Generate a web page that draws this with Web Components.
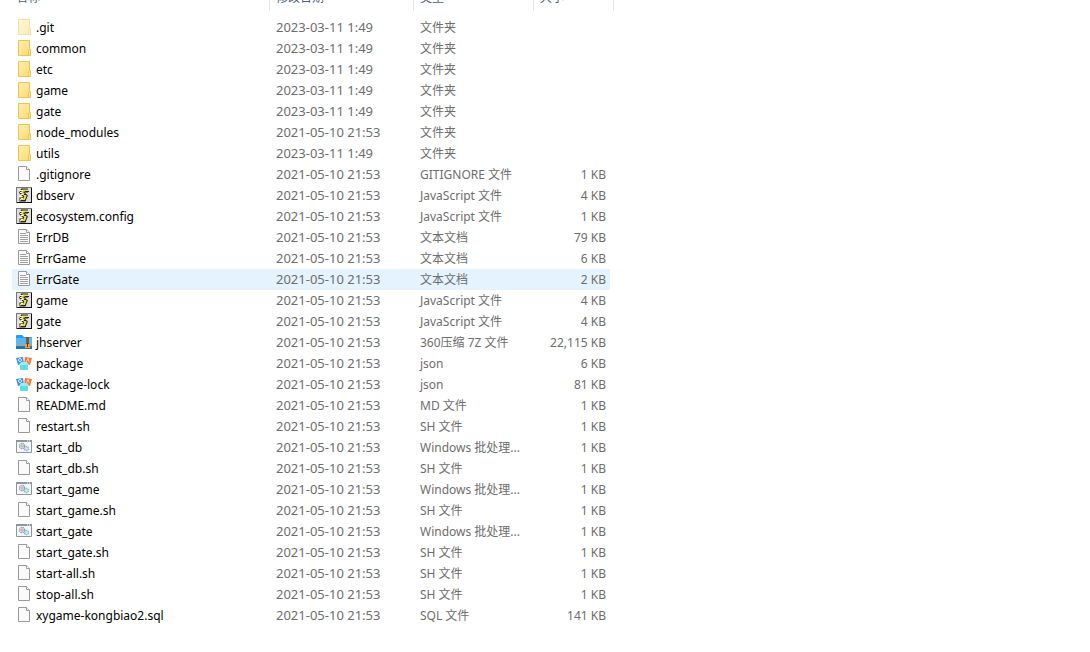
<!DOCTYPE html>
<html lang="zh-CN">
<head>
<meta charset="utf-8">
<title>jhserver</title>
<style>
  body { margin: 0; background: #fff; font: 12px/21px "Noto Sans", "Noto Sans CJK SC", sans-serif; }
</style>
</head>
<body>
<file-list></file-list>
<script>
const NOTE = `<path d="M2.500 .5h8l3 3v11h-11z" fill="#fafafa" stroke="#999"/><path d="M10.500 .500v3h3" fill="#fff" stroke="#999"/>`;
const ICONS = {
  folder: `<defs><linearGradient id="g" x2="1" y2="1"><stop stop-color="#ffefb3"/><stop offset="1" stop-color="#ffda70"/></linearGradient></defs>
    <path d="M2.500 .5h11v15h-11z" fill="url(#g)" stroke="#e9c752"/><path d="M12.500 15.500v-5l1-1h1v6z" fill="#ffe48c" stroke="#e9c752"/>`,
  file: NOTE,
  text: NOTE + `<path d="M4 4.500h6M4 6.500h8M4 8.500h8M4 10.500h8M4 12.500h8" stroke="#a0a0a0"/>`,
  script: `<path d="M0 0h16v16H0z" fill="#777"/><path d="M1 1h15v15H1z" fill="#111"/><path d="M1 1h14v14H1z" fill="#dedede"/>
    <path d="M12 3.500H6.500l-1 2 4 3.500-1.500 3.500H3.500" fill="none" stroke="#222" stroke-width="4"/>
    <path d="M12 3.500H7L6 5.500 9.500 9 8 12.500H4" fill="none" stroke="#efe03a" stroke-width="2"/>
    <path d="M4 3.500h3M4 5.500h2M5 7.500h2M3 9.500h3M5 11.500h2" stroke="#fff"/><path d="M9 4.500h4M8 7.500h2M5 13.500h5" stroke="#222"/>`,
  archive: `<path d="M0 2q0-1 1-1h5l2 2h7q1 0 1 1v10H0z" fill="#2a9be8"/><path d="M0 4h16v9H0z" fill="#55b9f8"/><path d="M0 11h16v4H0z" fill="#1778cb"/>
    <path d="M10 3h3v12h-3z" fill="#8d5524"/><path d="M0 11h16v1H0z" fill="#e89b32"/><path d="M9 10h5v4H9z" fill="#e9a13b"/><path d="M11 9h1v4h-1z" fill="#5c2c13"/>`,
  json: `<path d="M0 3l7-1 1 7-6 1z" fill="#3f93ee"/><path d="M9 2l7 1-2 7-6-1z" fill="#f4793b"/>
    <circle cx="4" cy="5" r="1.500" fill="none" stroke="#d8eeff"/><path d="M10.500 6.500l1.500-3 1 3" fill="none" stroke="#ffe0cd"/>
    <path d="M4 9h8v5q0 1-1 1H5q-1 0-1-1z" fill="#62dce4"/><path d="M5 7h6l2 3H3z" fill="#93f0f0"/>`,
  batch: `<path d="M.5 1.500h15v12H.5z" fill="#f6f6f6" stroke="#8c969e"/><path d="M0 1h16v2H0z" fill="#8c969e"/><path d="M11 2h1M13 2h1" stroke="#fff"/>
    <circle cx="6" cy="7" r="2.500" fill="none" stroke="#9a9a9a" stroke-width="1.500" stroke-dasharray="1.300 .7"/><circle cx="6" cy="7" r="1" fill="none" stroke="#aaa"/>
    <circle cx="10.500" cy="9.500" r="2" fill="#d9effb" stroke="#7db9dc" stroke-width="1.500" stroke-dasharray="1.300 .6"/>`
};

class FileIcon extends HTMLElement {
  connectedCallback() {
    this.attachShadow({ mode: "open" }).innerHTML = `
      <style>
        :host { display: block; flex: none; width: 16px; height: 16px; }
        :host([faded]) { opacity: .5; }
        svg { display: block; }
      </style>
      <svg width="16" height="16" viewBox="0 0 16 16" aria-hidden="true">${ICONS[this.getAttribute("kind")]}</svg>`;
  }
}
customElements.define("file-icon", FileIcon);

const OLD = "2021-05-10 21:53", NEW = "2023-03-11 1:49";
const FILES = [
  ["folder", ".git", NEW, "文件夹", ""],
  ["folder", "common", NEW, "文件夹", ""],
  ["folder", "etc", NEW, "文件夹", ""],
  ["folder", "game", NEW, "文件夹", ""],
  ["folder", "gate", NEW, "文件夹", ""],
  ["folder", "node_modules", OLD, "文件夹", ""],
  ["folder", "utils", NEW, "文件夹", ""],
  ["file", ".gitignore", OLD, "GITIGNORE 文件", "1 KB"],
  ["script", "dbserv", OLD, "JavaScript 文件", "4 KB"],
  ["script", "ecosystem.config", OLD, "JavaScript 文件", "1 KB"],
  ["text", "ErrDB", OLD, "文本文档", "79 KB"],
  ["text", "ErrGame", OLD, "文本文档", "6 KB"],
  ["text", "ErrGate", OLD, "文本文档", "2 KB"],
  ["script", "game", OLD, "JavaScript 文件", "4 KB"],
  ["script", "gate", OLD, "JavaScript 文件", "4 KB"],
  ["archive", "jhserver", OLD, "360压缩 7Z 文件", "22,115 KB"],
  ["json", "package", OLD, "json", "6 KB"],
  ["json", "package-lock", OLD, "json", "81 KB"],
  ["file", "README.md", OLD, "MD 文件", "1 KB"],
  ["file", "restart.sh", OLD, "SH 文件", "1 KB"],
  ["batch", "start_db", OLD, "Windows 批处理...", "1 KB"],
  ["file", "start_db.sh", OLD, "SH 文件", "1 KB"],
  ["batch", "start_game", OLD, "Windows 批处理...", "1 KB"],
  ["file", "start_game.sh", OLD, "SH 文件", "1 KB"],
  ["batch", "start_gate", OLD, "Windows 批处理...", "1 KB"],
  ["file", "start_gate.sh", OLD, "SH 文件", "1 KB"],
  ["file", "start-all.sh", OLD, "SH 文件", "1 KB"],
  ["file", "stop-all.sh", OLD, "SH 文件", "1 KB"],
  ["file", "xygame-kongbiao2.sql", OLD, "SQL 文件", "141 KB"]
];

class FileList extends HTMLElement {
  connectedCallback() {
    const rows = FILES.map(([kind, name, date, type, size]) => `
      <tr${name === "ErrGate" ? ' class="active"' : ""}>
        <td><div class="name"><file-icon kind="${kind}"${name === ".git" ? " faded" : ""}></file-icon><span>${name}</span></div></td>
        <td class="date">${date}</td><td>${type}</td><td class="size">${size}</td>
      </tr>`).join("");
    this.attachShadow({ mode: "open" }).innerHTML = `
      <style>
        :host { display: block; overflow: hidden; padding: 0 12px 24px; }
        table { table-layout: fixed; width: 602px; margin-top: -13px; border-collapse: separate; border-spacing: 0; color: #6d6d6d; }
        .c-name { width: 258px; } .c-date { width: 144px; } .c-type { width: 120px; } .c-size { width: 76px; } .c-end { width: 4px; }
        th { height: 24px; padding: 0 0 2px 6px; box-sizing: border-box; text-align: left; line-height: 20px; font-weight: 400; color: #4c607a; border-right: 1px solid #e5e5e5; }
        th:first-child { padding-left: 4px; }
        th.last { border-right: 0; }
        th.end { padding: 0; }
        tbody::before { content: ""; display: table-row; height: 6px; }
        td { height: 21px; padding: 0 4px 0 6px; white-space: nowrap; }
        td:first-child { padding-left: 4px; }
        .name { display: flex; align-items: flex-start; gap: 4px; color: #000; }
        file-icon { margin-top: 2px; }
        .date { font-size: 13px; }
        .size { text-align: right; }
        .active td { background: #e5f3ff; }
      </style>
      <table>
        <colgroup><col class="c-name"><col class="c-date"><col class="c-type"><col class="c-size"><col class="c-end"></colgroup>
        <thead><tr><th>名称</th><th>修改日期</th><th>类型</th><th class="last">大小</th><th class="end"></th></tr></thead>
        <tbody>${rows}</tbody>
      </table>`;
  }
}
customElements.define("file-list", FileList);
</script>
</body>
</html>
